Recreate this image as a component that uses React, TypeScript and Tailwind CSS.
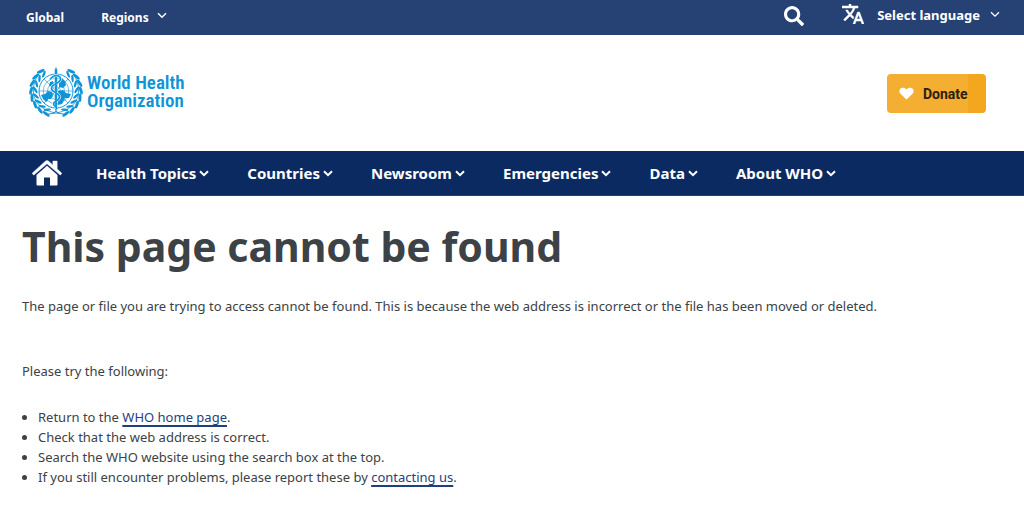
import React from "react";

function Chevron({ className }: { className: string }) {
  return (
    <svg viewBox="0 0 10 7" className={className} fill="none" stroke="currentColor" aria-hidden="true">
      <path d="M1 1.2 5 5.2 9 1.2" />
    </svg>
  );
}

const leafAngles = [14, 31, 48, 65, 82, 99, 116, 133];

function Wreath() {
  return (
    <g>
      <path d="M30 46.500C17 45 5 38 4.500 25 4.200 18 6 12 10 7" fill="none" stroke="currentColor" strokeWidth="0.8" />
      {leafAngles.map((a) => (
        <g key={a} transform={`rotate(${a} 27 24)`}>
          <ellipse cx="23" cy="48.600" rx="4.200" ry="1.500" transform="rotate(24 23 48.600)" />
          <ellipse cx="23" cy="44.300" rx="3.800" ry="1.200" transform="rotate(-22 23 44.300)" />
        </g>
      ))}
    </g>
  );
}

function Emblem() {
  return (
    <svg viewBox="0 0 54 48" className="h-12 w-[54px] overflow-visible text-[#0f95d7]" fill="currentColor" aria-hidden="true">
      <Wreath />
      <g transform="translate(54 0) scale(-1 1)">
        <Wreath />
      </g>
      <circle cx="27" cy="24" r="18.200" fill="#fff" />
      <g fill="none" stroke="currentColor" strokeWidth="0.6">
        <circle cx="27" cy="24" r="17" strokeWidth="1" />
        <circle cx="27" cy="24" r="12.800" />
        <circle cx="27" cy="24" r="8.500" />
        <circle cx="27" cy="24" r="4.300" />
        <path d="M10 24H44M15 12 39 36M39 12 15 36" />
      </g>
      <path d="M12 28l4-1 3-3 4 1 1 4-2 3-3 0-1 3-2-1-2-2zM21 15l3-1 1 3-2 3-3-1zM30 12l3-1 3 3 1 4-3 3-4-1zM29 24l5-1 3 3 5 1-2 4-4 0-3 6-4 1z" />
      <path d="M25.500 3 27-.5 28.500 3V40L27 47.500 25.500 40z" stroke="#fff" strokeWidth="0.4" />
      <path
        d="M21 12.500 23.500 10c3-2.500 8-1.500 8 2 0 4.500-9 4.500-9 9.500 0 4 8 4 8 8.500 0 4-6 4-6 7 0 2 3.500 2 3.500 5"
        fill="none"
        stroke="#fff"
        strokeWidth="2.800"
      />
      <path
        d="M21 12.500 23.500 10c3-2.500 8-1.500 8 2 0 4.500-9 4.500-9 9.500 0 4 8 4 8 8.500 0 4-6 4-6 7 0 2 3.500 2 3.500 5"
        fill="none"
        stroke="currentColor"
        strokeWidth="1.700"
      />
      <path d="M27 12V40" stroke="currentColor" strokeWidth="1.600" />
      <path d="M17 47.500Q24 47 27 44.500 30 47 37 47.500" fill="none" stroke="currentColor" />
    </svg>
  );
}

const menu = ["Health Topics", "Countries", "Newsroom", "Emergencies", "Data", "About WHO"];

const linkClass =
  "text-[#1f3f7d] underline decoration-2 underline-offset-[3px] [text-decoration-skip-ink:none]";

export default function App() {
  return (
    <div className="min-h-screen bg-white font-['Noto_Sans',sans-serif] text-[#3c4245]">
      <div className="flex h-[35px] items-center justify-between bg-[#264173] pr-6 pl-[26px] text-white">
        <nav aria-label="Regional sites" className="flex items-center gap-[37px] text-xs font-bold">
          <a href="#global">Global</a>
          <button type="button" className="flex items-center gap-2">
            Regions
            <Chevron className="mb-1 w-[10px] stroke-[1.5]" />
          </button>
        </nav>
        <div className="flex items-center pb-1">
          <button type="button" aria-label="Search" className="mr-[38px]">
            <svg viewBox="0 0 512 512" className="size-5" fill="currentColor" aria-hidden="true">
              <path d="M505 442.700 405.300 343c-4.500-4.500-10.600-7-17-7H372c27.600-35.300 44-79.700 44-128C416 93.100 322.900 0 208 0S0 93.100 0 208s93.100 208 208 208c48.300 0 92.700-16.400 128-44v16.300c0 6.400 2.500 12.500 7 17l99.700 99.700c9.400 9.400 24.600 9.400 33.900 0l28.300-28.300c9.400-9.400 9.400-24.600.1-34zM208 336c-70.700 0-128-57.200-128-128 0-70.700 57.200-128 128-128 70.700 0 128 57.200 128 128 0 70.700-57.200 128-128 128z" />
            </svg>
          </button>
          <button type="button" className="flex items-center text-[13px] font-bold">
            <svg
              viewBox="1 2 22 20"
              className="mr-[13px] mb-[3px] h-5 w-[22px] stroke-[0.5]"
              fill="currentColor"
              stroke="currentColor"
              aria-hidden="true"
            >
              <path d="M12.870 15.070 10.330 12.560l.03-.03A17.520 17.520 0 0 0 14.070 6H17V4h-7V2H8v2H1v2h11.170C11.500 7.920 10.440 9.750 9 11.350 8.070 10.320 7.300 9.190 6.690 8h-2c.73 1.630 1.730 3.170 2.980 4.560l-5.090 5.020L4 19l5-5 3.110 3.110.76-2.040zM18.500 10h-2L12 22h2l1.120-3h4.750L21 22h2l-4.500-12zm-2.620 7 1.620-4.330L19.120 17h-3.240z" />
            </svg>
            Select language
            <Chevron className="mb-0.5 ml-[10px] w-[10px] stroke-[1.300]" />
          </button>
        </div>
      </div>

      <header className="flex h-[116px] items-center justify-between pr-[38px] pl-[29px]">
        <a href="#home" className="mb-1 flex items-center gap-1 text-[#0f95d7]">
          <Emblem />
          <span className="pt-0.5 font-['Liberation_Sans_Narrow','Roboto_Condensed',Roboto,sans-serif] text-[19px] leading-[18px] font-semibold">
            World Health
            <br />
            Organization
          </span>
        </a>
        <a
          href="#donate"
          className="mt-px flex h-[39px] w-[99px] items-center gap-[9px] rounded bg-linear-to-r from-[#f4ae32] from-82% to-[#f3a71f] to-82% pl-3 font-[Roboto,sans-serif] text-sm font-bold text-[#2b200c]"
        >
          <svg viewBox="0 0 16 14" className="h-[13px] w-[15px]" fill="#fff" aria-hidden="true">
            <path d="M8 13.500 1.500 7.300C-.5 5.200.2 1.500 3.200.8 5 .4 6.800 1 8 2.700 9.200 1 11 .4 12.800.8c3 .7 3.700 4.400 1.700 6.500z" />
          </svg>
          Donate
        </a>
      </header>

      <nav aria-label="Main" className="flex h-[45px] items-center border-b border-[#264173] bg-[#0c2a62] pl-8 text-white">
        <a href="#home" aria-label="Home" className="mr-[34px]">
          <svg viewBox="0 0 30 26" className="h-[26px] w-[30px]" fill="currentColor" aria-hidden="true">
            <path d="M15 5.800 4.500 15V24.500q0 1 1 1H12V17.500h6v8h6.500q1 0 1-1V15z" />
            <path
              d="M.4 13 13.300 1.200q1.700-1.500 3.400 0L20.800 5V1H25.200V9L29.600 13q.4.400 0 .8l-1 1q-.4.400-.8 0L15 3.800 2.200 14.800q-.4.400-.8 0l-1-1q-.4-.4 0-.8z"
              stroke="currentColor"
              strokeWidth="0.4"
            />
          </svg>
        </a>
        <div className="flex items-center gap-[38px]">
          {menu.map((label) => (
            <button key={label} type="button" className="flex items-center gap-[3px] text-[15px] font-bold">
              {label}
              <Chevron className="w-[10px] stroke-2" />
            </button>
          ))}
        </div>
      </nav>

      <main className="px-[22px] pt-[23px] text-[13px] leading-5">
        <h1 className="text-[41px] leading-[54px] font-bold">This page cannot be found</h1>
        <p className="mt-[23px]">
          The page or file you are trying to access cannot be found. This is because the web address is incorrect or the
          file has been moved or deleted.
        </p>
        <p className="mt-[45px]">Please try the following:</p>
        <ul className="mt-[26px] list-disc pl-4">
          <li>
            Return to the{" "}
            <a href="#home" className={linkClass}>
              WHO home page
            </a>
            .
          </li>
          <li>Check that the web address is correct.</li>
          <li>Search the WHO website using the search box at the top.</li>
          <li>
            If you still encounter problems, please report these by{" "}
            <a href="#contact" className={linkClass}>
              contacting us
            </a>
            .
          </li>
        </ul>
      </main>
    </div>
  );
}
